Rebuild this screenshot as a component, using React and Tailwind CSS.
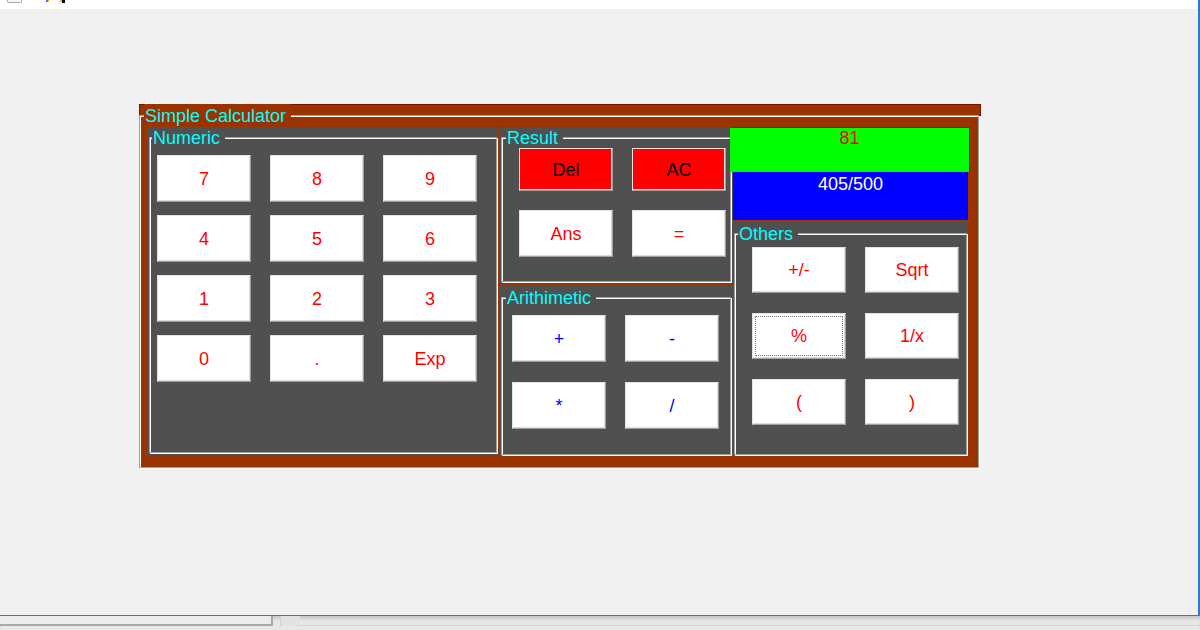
import React from 'react'

// ─── Shared classes ──────────────────────────────────────────
const BTN =
  'flex items-center justify-center border border-t-[#e3e3e3] border-l-[#e3e3e3] border-r-[#a0a0a0] border-b-[#a0a0a0] shadow-[inset_-1px_-1px_0_#dcdcdc] text-[18px] leading-none'

const ETCHED = 'h-full border border-[#a0a0a0] shadow-[inset_1px_1px_0_#ffffff,1px_1px_0_#ffffff]'

const LEGEND = 'ml-[2px] pl-[1px] pr-[5px] pt-[2px] bg-[#505050] text-[18px] leading-[19px] text-[#00ffff]'

const NUMERIC = ['7', '8', '9', '4', '5', '6', '1', '2', '3', '0', '.', 'Exp']
const ARITH = ['+', '-', '*', '/']
const OTHERS = ['+/-', 'Sqrt', '%', '1/x', '(', ')']

// ─── Sub-components ──────────────────────────────────────────
function Key({ label, className = '' }) {
  return <button className={`${BTN} ${className}`}>{label}</button>
}

function TopStrip() {
  return (
    <div className="h-[9px] bg-white flex items-start">
      <div className="ml-[7px] w-[15px] h-[3px] border border-t-0 border-[#a8a8a8] rounded-b-[2px] bg-[#f6f6f6]" />
      <div className="ml-[24px] w-[2px] h-[2px] bg-[#3a7bd5]" />
      <div className="w-[1px] h-[2px] bg-[#e8c000]" />
      <div className="ml-[11px] w-[2px] h-[2px] bg-[#e8c000]" />
      <div className="w-[3px] h-[3px] bg-black" />
    </div>
  )
}

function BottomBar() {
  return (
    <div className="h-[14px] flex items-start bg-[#e8e8e8] shadow-[inset_0_4px_4px_-2px_rgba(0,0,0,0.18)]">
      <div className="w-[273px] h-[10px] border-r-2 border-b-2 border-[#a8a8a8] bg-[#ececec]" />
      <div className="ml-[7px] w-[20px] h-[10px] border-l border-[#cfcfcf] bg-[#e2e2e2]" />
      <div className="flex-1 h-[10px] border-b border-[#d4d4d4]" />
    </div>
  )
}

function Calculator() {
  return (
    <div className="w-[842px]">
      {/* title strip above the etched line */}
      <div className="h-[12px] w-[842px] bg-[#993300] border border-[#7a1000]" />

      <fieldset className="-mt-[12px] w-[840px] h-[364px] bg-[#993300] border border-[#a0a0a0] shadow-[inset_1px_1px_0_#ffffff,1px_1px_0_#ffffff]">
        <legend className="ml-[4px] pl-[1px] pr-[5px] pt-[2px] bg-[#993300] text-[18px] leading-[21px] text-[#00ffff]">
          Simple Calculator
        </legend>

        <div className="flex ml-[7px]">
          {/* Numeric */}
          <div className="w-[351px] h-[328px] bg-[#505050] pl-[2px] pr-[1px] pb-[2px]">
            <fieldset className={ETCHED}>
              <legend className={LEGEND}>Numeric</legend>
              <div className="grid grid-cols-[repeat(3,94px)] auto-rows-[47px] gap-x-[19px] gap-y-[13px] pl-[7px] pt-[7px]">
                {NUMERIC.map((k) => (
                  <Key key={k} label={k} className="bg-white text-[#ff0000]" />
                ))}
              </div>
            </fieldset>
          </div>

          {/* Result + Arithmetic */}
          <div className="ml-[1px] w-[234px] flex flex-col">
            <div className="h-[156px] bg-[#505050] px-[2px] pb-[1px]">
              <fieldset className={ETCHED}>
                <legend className={`${LEGEND} ml-[4px]`}>Result</legend>
                <div className="grid grid-cols-[repeat(2,94px)] grid-rows-[43px_47px] gap-x-[19px] gap-y-[19px] pl-[17px]">
                  <Key label="Del" className="bg-[#ff0000] text-black" />
                  <Key label="AC" className="bg-[#ff0000] text-black" />
                  <Key label="Ans" className="bg-white text-[#ff0000]" />
                  <Key label="=" className="bg-white text-[#ff0000]" />
                </div>
              </fieldset>
            </div>

            <div className="mt-[2px] h-[171px] bg-[#505050] px-[2px] pt-[2px] pb-[1px]">
              <fieldset className={ETCHED}>
                <legend className={`${LEGEND} ml-[4px]`}>Arithimetic</legend>
                <div className="grid grid-cols-[repeat(2,94px)] auto-rows-[47px] gap-x-[19px] gap-y-[20px] pl-[10px] pt-[7px]">
                  {ARITH.map((k) => (
                    <Key key={k} label={k} className="bg-white text-[#0000ff]" />
                  ))}
                </div>
              </fieldset>
            </div>
          </div>

          {/* Display + Others */}
          <div className="-ml-[3px] w-[240px] flex flex-col">
            <div className="h-[45px] bg-[#00ff00] border-t border-r border-[#cc0000] text-center text-[18px] leading-[20px] text-[#ff0000]">
              81
            </div>
            <div className="ml-[3px] w-[235px] h-[48px] bg-[#0000ff] pt-[2px] text-center text-[18px] leading-[20px] text-white">
              405/500
            </div>

            <div className="ml-[3px] mt-[1px] w-[235px] h-[235px] bg-[#505050] px-[1px] pt-[2px] pb-[1px]">
              <fieldset className={ETCHED}>
                <legend className={`${LEGEND} ml-[3px]`}>Others</legend>
                <div className="grid grid-cols-[repeat(2,94px)] auto-rows-[46px] gap-x-[19px] gap-y-[20px] pl-[17px] pt-[3px]">
                  {OTHERS.map((k) => (
                    <Key
                      key={k}
                      label={k}
                      className={
                        k === '%'
                          ? 'bg-white text-[#ff0000] outline outline-1 outline-dotted outline-[#7a7a7a] outline-offset-[-4px]'
                          : 'bg-white text-[#ff0000]'
                      }
                    />
                  ))}
                </div>
              </fieldset>
            </div>
          </div>
        </div>
      </fieldset>
    </div>
  )
}

// ─── Main Component ───────────────────────────────────────────
export default function App() {
  return (
    <div className="w-[1200px] h-[630px] overflow-hidden bg-[#e8e8e8] font-['Liberation_Sans',Arial,sans-serif]">
      <div className="h-[616px] flex flex-col bg-[#f0f0f0] border-r-2 border-b border-[#2c7ad6]">
        <TopStrip />
        <div className="pt-[95px] pl-[139px]">
          <Calculator />
        </div>
      </div>
      <BottomBar />
    </div>
  )
}
